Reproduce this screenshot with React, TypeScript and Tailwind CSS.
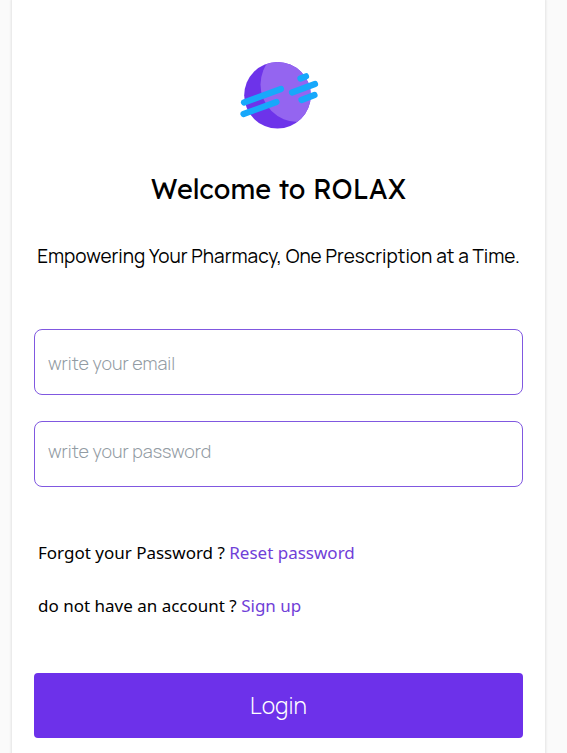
function Logo() {
  return (
    <svg viewBox="0 0 80 68" className="h-[68px] w-20" role="img" aria-label="Rolax logo">
      <defs>
        <clipPath id="planet">
          <circle cx="38.5" cy="34.3" r="33.3" />
        </clipPath>
      </defs>
      <circle cx="38.5" cy="34.3" r="33.3" fill="#6d33ea" />
      <circle cx="59" cy="23.5" r="37.5" fill="#9465f0" clipPath="url(#planet)" />
      <g stroke="#17a8fb" strokeWidth="6.2" strokeLinecap="round">
        <path d="M5 41.5 L42 28" />
        <path d="M4.5 53 L37.5 41" />
        <path d="M61.5 17.5 L67 15.3" />
        <path d="M53 31.5 L76 23" />
        <path d="M62.5 39 L75.5 34" />
      </g>
    </svg>
  );
}

const fieldClass =
  "h-[66px] w-full rounded-lg border border-[#8058e0] bg-white px-[13px] font-['Manrope','Inter',sans-serif] text-lg font-light text-black outline-none placeholder:text-[#929ba3]";

export default function App() {
  return (
    <div className="min-h-screen bg-[#fafafa] pr-[22px] pl-3">
      <main className="flex min-h-screen flex-col items-center bg-white px-[22px] pt-[61px] pb-4 shadow-[0_0_2px_1px_#e4e4e4]">
        <Logo />
        <h1 className="mt-10 font-['Lexend','Lato',sans-serif] text-[27px] leading-10 font-normal text-black">
          Welcome to ROLAX
        </h1>
        <p className="mt-8 text-center font-['Manrope','Inter',sans-serif] text-[19px] leading-[30px] font-normal text-black">
          Empowering Your Pharmacy, One Prescription at a Time.
        </p>
        <form className="mt-[58px] flex w-full flex-col" onSubmit={(e) => e.preventDefault()}>
          <div className="flex flex-col gap-[26px]">
            <input type="email" aria-label="Email" placeholder="write your email" className={`${fieldClass} pt-0.5`} />
            <input type="password" aria-label="Password" placeholder="write your password" className={`${fieldClass} pb-1.5`} />
          </div>
          <div className="mt-[52px] flex flex-col gap-[26px] px-1 font-['Noto_Sans',sans-serif] text-[17px] leading-[27px] text-black">
            <p>
              Forgot your Password ? <a href="#reset" className="text-[#7040d8]">Reset password</a>
            </p>
            <p>
              do not have an account ? <a href="#signup" className="text-[#7040d8]">Sign up</a>
            </p>
          </div>
          <button
            type="submit"
            className="mt-[54px] h-[65px] w-full rounded bg-[#6d31ea] font-['Manrope','Inter',sans-serif] text-[23px] font-light text-white"
          >
            Login
          </button>
        </form>
      </main>
    </div>
  );
}
